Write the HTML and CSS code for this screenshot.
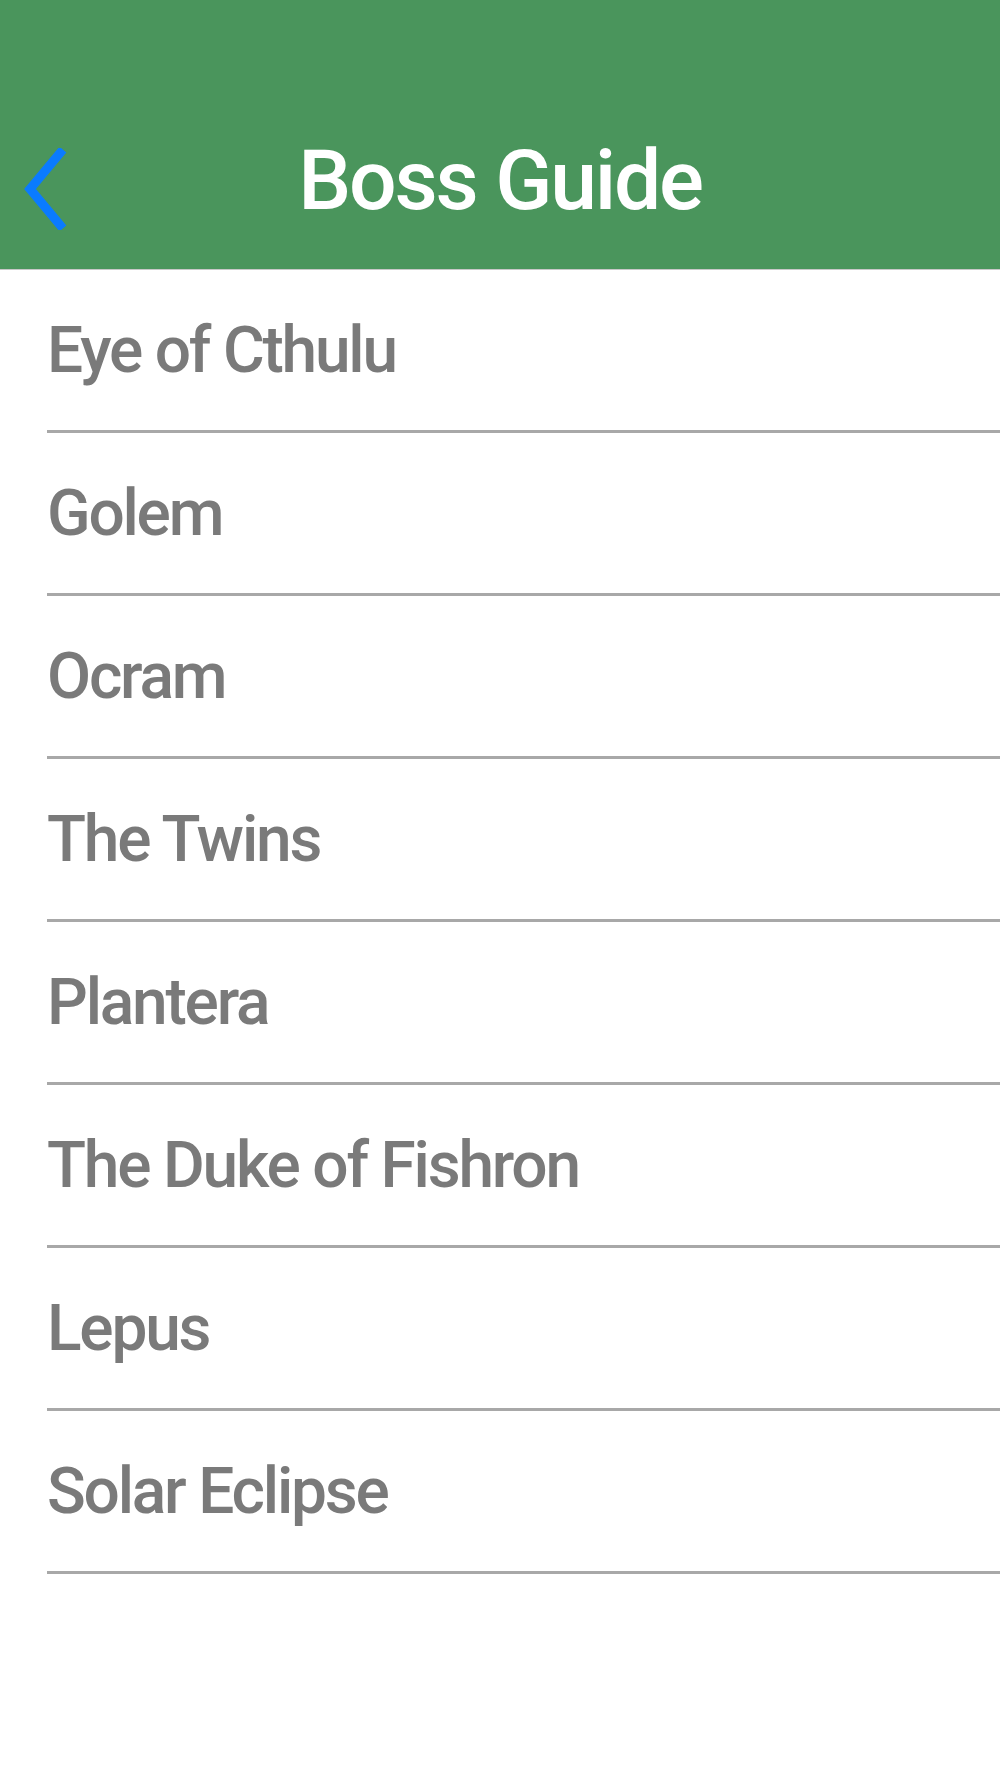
FILE: index.html
```html
<!DOCTYPE html>
<html lang="en">
<head>
  <meta charset="UTF-8" />
  <meta name="viewport" content="width=device-width, initial-scale=1.0"/>
  <title>Boss Guide</title>
  <link rel="stylesheet" href="styles.css">
</head>
<body>
  <header class="nav-bar">
    <a class="back-btn" href="#" aria-label="Back">
      <svg width="44" height="82" viewBox="0 0 44 82">
        <polyline points="37,5 7,41 37,77" fill="none" stroke="#0a7bff" stroke-width="9" stroke-linecap="square" />
      </svg>
    </a>
    <h1 class="nav-title">Boss Guide</h1>
  </header>

  <ul class="boss-list">
    <li class="boss-row">Eye of Cthulu</li>
    <li class="boss-row">Golem</li>
    <li class="boss-row">Ocram</li>
    <li class="boss-row">The Twins</li>
    <li class="boss-row">Plantera</li>
    <li class="boss-row">The Duke of Fishron</li>
    <li class="boss-row">Lepus</li>
    <li class="boss-row">Solar Eclipse</li>
  </ul>
</body>
</html>
```

FILE: styles.css
```css
body {
  margin: 0;
  font-family: Roboto, 'Liberation Sans', sans-serif;
  background: white;
}

.nav-bar {
  position: relative;
  height: 270px;
  background: #4a955c;
  border-bottom: 1px solid #c8c8c8;
  display: flex;
  align-items: flex-end;
  justify-content: center;
  padding-bottom: 46px;
  box-sizing: border-box;
}

.back-btn {
  position: absolute;
  left: 23px;
  top: 148px;
  display: block;
}

.nav-title {
  margin: 0;
  color: white;
  font-size: 84px;
  font-weight: 500;
  line-height: 1;
  letter-spacing: -2.2px;
}

.boss-list {
  list-style: none;
  margin: 0;
  padding: 0 0 0 47px;
}

.boss-row {
  height: 160px;
  display: flex;
  align-items: center;
  border-bottom: 3px solid #a8a8a8;
  color: #7a7a7a;
  font-size: 64px;
  font-weight: 500;
  letter-spacing: -2.2px;
}
```
